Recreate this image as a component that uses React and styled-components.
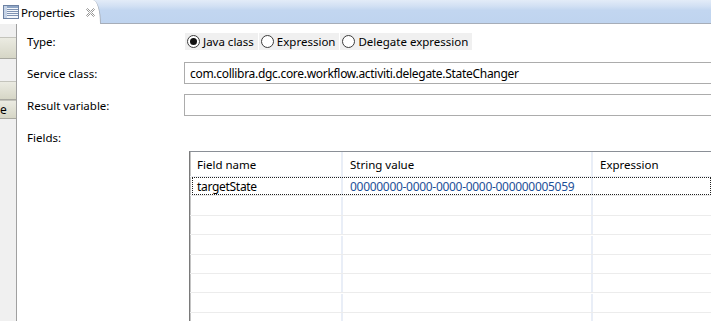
import React from 'react';
import styled, { createGlobalStyle } from 'styled-components';

const Global = createGlobalStyle`
  html, body {
    margin: 0;
    padding: 0;
    background: #fff;
  }
  body {
    width: 711px;
    height: 321px;
    overflow: hidden;
    font-family: "Noto Sans", "Open Sans", sans-serif;
    font-size: 11.5px;
    color: #1a1a1a;
  }
`;

const Page = styled.div`
  display: flex;
  flex-direction: column;
  width: 711px;
  height: 321px;
  overflow: hidden;
`;

const TabBar = styled.div`
  display: flex;
  height: 24px;
  flex-shrink: 0;
  background: linear-gradient(#e3ecf8 0%, #d3e1f4 25%, #c2d6f0 45%, #bfd4ef 100%);
  border-bottom: 1px solid #a6adb8;
  box-sizing: border-box;
`;

const Tab = styled.div`
  display: flex;
  align-items: center;
  gap: 2px;
  width: 101px;
  padding-left: 3px;
  box-sizing: border-box;
  background: #fff;
  border-right: 1px solid #a8b0bc;
  border-top-right-radius: 8px 24px;
  margin-bottom: -1px;
  color: #000;
`;

const TabLabel = styled.span`
  font-size: 11.5px;
  letter-spacing: -0.2px;
`;

const Close = styled.svg`
  margin-left: 9px;
  margin-top: 1px;
`;

const Body = styled.div`
  display: flex;
  flex: 1;
  min-height: 0;
`;

const SideStrip = styled.div`
  width: 16px;
  flex-shrink: 0;
  background: #f0f0f0;
  border-right: 1px solid #a0a0a0;
  display: flex;
  flex-direction: column;
  padding-top: 13px;
`;

const StripButton = styled.div`
  height: ${(p) => p.$h}px;
  box-sizing: border-box;
  margin-top: ${(p) => p.$top || 0}px;
  background: linear-gradient(#ebebe2, #d6d6c6);
  border-top: 1px solid #c4c4bc;
  border-bottom: 1px solid #a8a8a0;
  display: flex;
  align-items: center;
  padding-left: 0;
  overflow: hidden;
  white-space: nowrap;
  font-size: 12px;
  color: #000;
`;

const Form = styled.div`
  flex: 1;
  display: grid;
  grid-template-columns: 157px 1fr;
  align-content: start;
  padding: 9px 0 0 10px;
  min-width: 0;
`;

const Label = styled.div`
  grid-column: ${(p) => (p.$wide ? '1 / -1' : '1')};
  display: flex;
  align-items: center;
  height: ${(p) => p.$h}px;
  margin-top: ${(p) => p.$top || 0}px;
  color: #000;
`;

const Field = styled.div`
  grid-column: 2;
  display: flex;
  align-items: center;
  height: ${(p) => p.$h}px;
  margin-top: ${(p) => p.$top || 0}px;
  min-width: 0;
`;

const RadioGroup = styled.div`
  display: flex;
  gap: 1px;
  margin-left: 1px;
  height: 17px;
`;

const RadioItem = styled.label`
  display: flex;
  align-items: center;
  gap: 3px;
  padding: 0 4px 0 2px;
  background: #f0f0f0;
  color: #000;
  white-space: nowrap;
`;

const Dot = styled.span`
  width: 11px;
  height: 11px;
  border-radius: 50%;
  border: 1px solid #3c3c3c;
  background: #fff;
  display: flex;
  align-items: center;
  justify-content: center;
  flex-shrink: 0;
  &::after {
    content: '';
    width: 7px;
    height: 7px;
    border-radius: 50%;
    background: ${(p) => (p.$on ? '#111' : 'transparent')};
  }
`;

const Input = styled.div`
  flex: 1;
  height: 22px;
  box-sizing: border-box;
  border: 1px solid #acacac;
  border-right: none;
  display: flex;
  align-items: center;
  padding-left: 5px;
  white-space: nowrap;
  color: #000;
  font-size: 12px;
  letter-spacing: -0.3px;
`;

const TableWrap = styled.div`
  grid-column: 2;
  margin: 5px 0 0 5px;
  border-top: 1px solid #8a8f96;
  border-left: 1px solid #7a7a7a;
  box-shadow: inset 1px 0 0 #c4c4c4;
  display: grid;
  grid-template-columns: 151px 250px 1fr;
  height: 200px;
`;

const HeadCell = styled.div`
  height: 24px;
  display: flex;
  align-items: center;
  padding-left: 7px;
  border-bottom: 1px solid #eef1f6;
  border-left: ${(p) => (p.$first ? 'none' : '2px solid #e9eef7')};
  color: #000;
`;

const Row = styled.div`
  grid-column: 1 / -1;
  display: grid;
  grid-template-columns: subgrid;
  height: 19px;
  box-sizing: border-box;
  border-bottom: 1px solid #ececec;
  position: relative;
  ${(p) =>
    p.$focus &&
    `&::after {
      content: '';
      position: absolute;
      left: 2px;
      right: 0;
      top: 0;
      bottom: 0;
      border: 1px dotted #222;
    }`}
`;

const Cell = styled.div`
  display: flex;
  align-items: center;
  padding-left: 7px;
  border-left: ${(p) => (p.$first ? 'none' : '2px solid #e9eef7')};
  color: ${(p) => p.$color || '#000'};
  white-space: nowrap;
  font-size: 12px;
  letter-spacing: -0.3px;
`;

const PropsIcon = () => (
  <svg width="16" height="14" viewBox="0 0 16 14">
    <rect x="0.5" y="0.5" width="15" height="13" fill="#f4f7fb" stroke="#6d82a3" />
    <rect x="1" y="1" width="14" height="2" fill="#8fa6c6" />
    <rect x="1" y="1" width="3" height="12" fill="#c6d3e6" />
    {[4.5, 6.5, 8.5, 10.5].map((y) => (
      <line key={y} x1="4" y1={y} x2="15" y2={y} stroke="#7f93b3" strokeWidth="1" />
    ))}
  </svg>
);

const CloseIcon = () => (
  <Close width="9" height="9" viewBox="0 0 9 9">
    <path
      d="M0.5 1.5 L1.5 0.5 L4.5 3.5 L7.5 0.5 L8.5 1.5 L5.5 4.5 L8.5 7.5 L7.5 8.5 L4.5 5.5 L1.5 8.5 L0.5 7.5 L3.5 4.5 Z"
      fill="#fff"
      stroke="#8a8a8a"
      strokeWidth="0.9"
    />
  </Close>
);

const emptyRows = Array.from({ length: 8 });

export default function App() {
  return (
    <Page>
      <Global />
      <TabBar>
        <Tab>
          <PropsIcon />
          <TabLabel>Properties</TabLabel>
          <CloseIcon />
        </Tab>
      </TabBar>
      <Body>
        <SideStrip>
          <StripButton $h={22} />
          <StripButton $h={19} $top={22} />
          <StripButton $h={19}>e</StripButton>
        </SideStrip>
        <Form>
          <Label $h={17}>Type:</Label>
          <Field $h={17}>
            <RadioGroup>
              <RadioItem>
                <Dot $on />
                Java class
              </RadioItem>
              <RadioItem>
                <Dot />
                Expression
              </RadioItem>
              <RadioItem>
                <Dot />
                Delegate expression
              </RadioItem>
            </RadioGroup>
          </Field>

          <Label $h={22} $top={12}>Service class:</Label>
          <Field $h={22} $top={12}>
            <Input>com.collibra.dgc.core.workflow.activiti.delegate.StateChanger</Input>
          </Field>

          <Label $h={22} $top={10}>Result variable:</Label>
          <Field $h={22} $top={10}>
            <Input />
          </Field>

          <Label $wide $h={18} $top={12}>Fields:</Label>

          <TableWrap>
            <HeadCell $first>Field name</HeadCell>
            <HeadCell>String value</HeadCell>
            <HeadCell>Expression</HeadCell>
            <Row $focus>
              <Cell $first>targetState</Cell>
              <Cell $color="#1d4f98">00000000-0000-0000-0000-000000005059</Cell>
              <Cell />
            </Row>
            {emptyRows.map((_, i) => (
              <Row key={i}>
                <Cell $first />
                <Cell />
                <Cell />
              </Row>
            ))}
          </TableWrap>
        </Form>
      </Body>
    </Page>
  );
}
